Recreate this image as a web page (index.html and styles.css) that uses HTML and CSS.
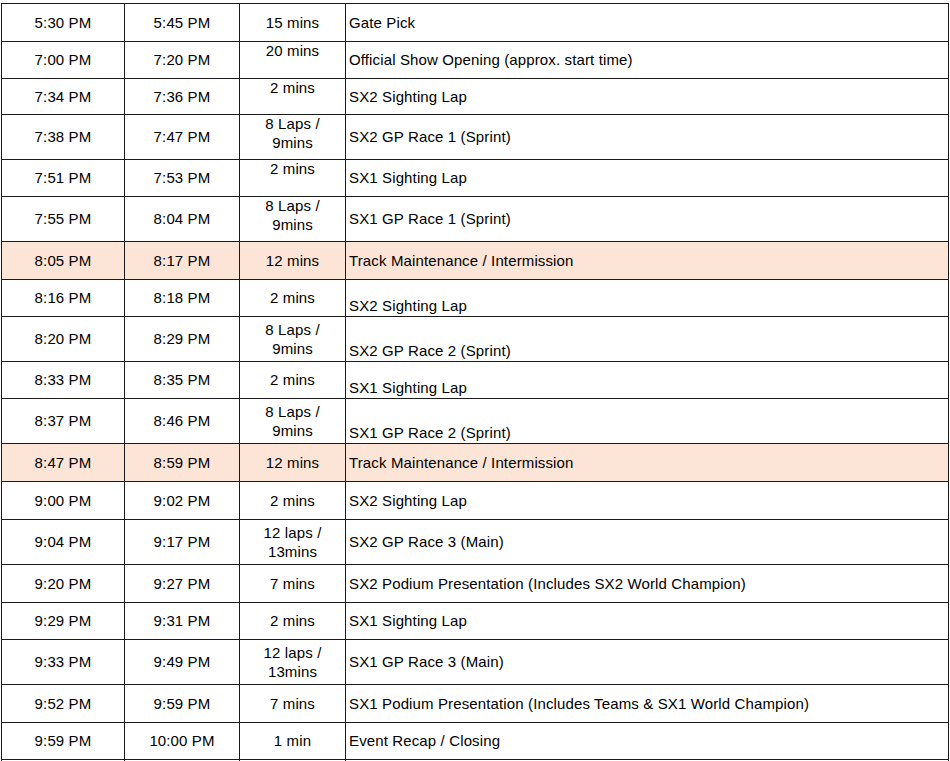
FILE: index.html
```html
<!DOCTYPE html>
<html>
<head>
<meta charset="utf-8">
<link rel="stylesheet" href="styles.css">
</head>
<body>
<table class="schedule">
  <colgroup>
    <col class="c-start"><col class="c-end"><col class="c-dur"><col class="c-desc">
  </colgroup>
  <tbody>
    <tr class="h38"><td>5:30 PM</td><td>5:45 PM</td><td>15 mins</td><td class="desc">Gate Pick</td></tr>
    <tr class="h37"><td>7:00 PM</td><td>7:20 PM</td><td class="top"><div class="lift">20 mins</div></td><td class="desc">Official Show Opening (approx. start time)</td></tr>
    <tr class="h36"><td>7:34 PM</td><td>7:36 PM</td><td class="top"><div class="lift">2 mins</div></td><td class="desc">SX2 Sighting Lap</td></tr>
    <tr class="h45"><td>7:38 PM</td><td>7:47 PM</td><td class="top"><div class="lift">8 Laps /<br>9mins</div></td><td class="desc">SX2 GP Race 1 (Sprint)</td></tr>
    <tr class="h37"><td>7:51 PM</td><td>7:53 PM</td><td class="top"><div class="lift">2 mins</div></td><td class="desc">SX1 Sighting Lap</td></tr>
    <tr class="h45"><td>7:55 PM</td><td>8:04 PM</td><td class="top"><div class="lift">8 Laps /<br>9mins</div></td><td class="desc">SX1 GP Race 1 (Sprint)</td></tr>
    <tr class="h38 hl"><td>8:05 PM</td><td>8:17 PM</td><td>12 mins</td><td class="desc">Track Maintenance / Intermission</td></tr>
    <tr class="h37"><td>8:16 PM</td><td>8:18 PM</td><td>2 mins</td><td class="desc bottom">SX2 Sighting Lap</td></tr>
    <tr class="h45"><td>8:20 PM</td><td>8:29 PM</td><td>8 Laps /<br>9mins</td><td class="desc bottom">SX2 GP Race 2 (Sprint)</td></tr>
    <tr class="h37"><td>8:33 PM</td><td>8:35 PM</td><td>2 mins</td><td class="desc bottom">SX1 Sighting Lap</td></tr>
    <tr class="h45"><td>8:37 PM</td><td>8:46 PM</td><td>8 Laps /<br>9mins</td><td class="desc bottom">SX1 GP Race 2 (Sprint)</td></tr>
    <tr class="h38 hl"><td>8:47 PM</td><td>8:59 PM</td><td>12 mins</td><td class="desc">Track Maintenance / Intermission</td></tr>
    <tr class="h38"><td>9:00 PM</td><td>9:02 PM</td><td>2 mins</td><td class="desc">SX2 Sighting Lap</td></tr>
    <tr class="h45"><td>9:04 PM</td><td>9:17 PM</td><td>12 laps /<br>13mins</td><td class="desc">SX2 GP Race 3 (Main)</td></tr>
    <tr class="h38"><td>9:20 PM</td><td>9:27 PM</td><td>7 mins</td><td class="desc">SX2 Podium Presentation (Includes SX2 World Champion)</td></tr>
    <tr class="h37"><td>9:29 PM</td><td>9:31 PM</td><td>2 mins</td><td class="desc">SX1 Sighting Lap</td></tr>
    <tr class="h45"><td>9:33 PM</td><td>9:49 PM</td><td>12 laps /<br>13mins</td><td class="desc">SX1 GP Race 3 (Main)</td></tr>
    <tr class="h38"><td>9:52 PM</td><td>9:59 PM</td><td>7 mins</td><td class="desc">SX1 Podium Presentation (Includes Teams &amp; SX1 World Champion)</td></tr>
    <tr class="h37"><td>9:59 PM</td><td>10:00 PM</td><td>1 min</td><td class="desc">Event Recap / Closing</td></tr>
    <tr class="h37"><td></td><td></td><td></td><td class="desc"></td></tr>
  </tbody>
</table>
</body>
</html>
```
FILE: styles.css
```css
html, body {
  margin: 0;
  padding: 0;
  background: #ffffff;
  overflow: hidden;
}

body {
  font-family: "Liberation Sans", Arial, sans-serif;
  font-size: 15px;
  color: #000000;
}

.schedule {
  border-collapse: collapse;
  table-layout: fixed;
  width: 948px;
  margin: 3px 0 0 1px;
}

.c-start { width: 123px; }
.c-end { width: 115px; }
.c-dur { width: 106px; }
.c-desc { width: 603px; }

.schedule td {
  border: 1px solid #1a1a1a;
  padding: 0 3px 1px;
  line-height: 19px;
  text-align: center;
  vertical-align: middle;
  white-space: nowrap;
  overflow: hidden;
  letter-spacing: 0.13px;
}

.schedule td.desc { text-align: left; }
.schedule td.top { vertical-align: top; }
.schedule td.bottom { vertical-align: bottom; padding-bottom: 1px; }

.lift { margin-top: -1px; }

.schedule tr.hl td { background: #fce4d6; }

.h36 { height: 36px; }
.h37 { height: 37px; }
.h38 { height: 38px; }
.h45 { height: 45px; }
```
